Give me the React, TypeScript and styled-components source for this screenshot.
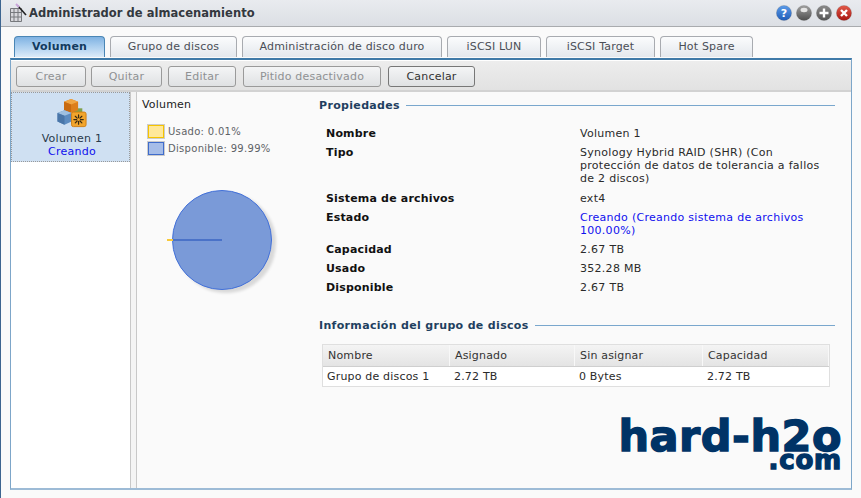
import React from "react";
import styled, { createGlobalStyle } from "styled-components";

const Global = createGlobalStyle`
  html, body { margin: 0; padding: 0; background: #fafafa; }
  body { font-family: "DejaVu Sans", Verdana, sans-serif; font-size: 11px; color: #222; letter-spacing: 0.18px; }
`;

const Win = styled.div`
  width: 861px; height: 498px; box-sizing: border-box; overflow: hidden;
  display: flex; flex-direction: column; background: #fafafa;
  border-left: 1px solid #3d6590; position: relative;
`;
const TitleBar = styled.header`
  height: 26px; flex: none; display: flex; align-items: center;
  background: linear-gradient(#e9ebef, #dcdfe4); border-bottom: 1px solid #a9abae;
  padding: 0 9px 0 8px;
`;
const Title = styled.h1`
  margin: 0 0 0 1px; font-size: 11.5px; font-weight: 700; color: #33383e; flex: 1; letter-spacing: 0.05px;
`;
const WinButtons = styled.div` display: flex; gap: 4px; `;
const TabStrip = styled.nav`
  display: flex; gap: 5px; height: 22px; padding: 8px 0 0 13px; flex: none;
  align-items: flex-end;
`;
const Tab = styled.div<{ $w: number; $active?: boolean }>`
  width: ${p => p.$w}px; height: 21px; box-sizing: border-box; text-align: center;
  border: 1px solid ${p => (p.$active ? "#4a86b5" : "#a8abb0")}; border-bottom: 0;
  border-radius: 4px 4px 0 0; line-height: 20px; font-size: 11px;
  font-weight: ${p => (p.$active ? 700 : 400)};
  color: ${p => (p.$active ? "#123a5e" : "#4a4e56")};
  background: ${p => (p.$active ? "linear-gradient(#7fb2e2, #a9cdee 45%, #dcebf8)" : "linear-gradient(#fbfcfd, #e4e8ed)")};
`;
const Panel = styled.main`
  margin: 1px 9px 0 9px; height: 432px; box-sizing: border-box; display: flex; flex-direction: column;
  border: 1px solid #7da6c9; border-bottom: 2px solid #9dbbd6; border-top: 2px solid #3f7aa8;
  box-shadow: inset 0 1px 0 #fff; padding-top: 1px;
`;
const Toolbar = styled.div`
  height: 31px; flex: none; box-sizing: border-box; display: flex; align-items: center;
  padding: 1px 0 0 5px; background: linear-gradient(#ededed, #e2e2e2); border-bottom: 2px solid #d2d2d2;
`;
const Btn = styled.button<{ $w: number; $gap?: number; $off?: boolean }>`
  width: ${p => p.$w}px; height: 21px; padding: 0; margin-left: ${p => p.$gap ?? 0}px;
  font: 11px "DejaVu Sans", sans-serif; letter-spacing: 0.2px;
  border: 1px solid ${p => (p.$off ? "#9a9a9a" : "#777")}; border-radius: 3px;
  color: ${p => (p.$off ? "#8f9193" : "#333")};
  background: linear-gradient(#f4f5f6, #dfe1e3);
`;
const Split = styled.div` flex: 1; display: flex; min-height: 0; `;
const List = styled.aside`
  width: 120px; box-sizing: border-box; flex: none; background: #fff; border-right: 1px solid #c8c8c8;
`;
const Item = styled.div`
  height: 70px; box-sizing: border-box; background: #cfe0f2; border: 1px dotted #999;
  display: flex; flex-direction: column; align-items: center; padding: 5px 0 0 3px; line-height: 13px; color: #2a3a4a;
  letter-spacing: 0.25px;
`;
const ItemName = styled.span` margin-top: 4px; `;
const Creating = styled.span` color: #1010ee; `;
const Gutter = styled.div` width: 6px; box-sizing: border-box; flex: none; background: #f4f4f4; border-right: 1px solid #c8c8c8; `;
const Content = styled.section` flex: 1; display: flex; background: #fafafa; min-width: 0; position: relative; `;
const Chart = styled.div` width: 182px; flex: none; padding: 6px 0 0 5px; box-sizing: border-box; `;
const Legend = styled.div` display: flex; flex-direction: column; gap: 2px; margin: 13px 0 0 5px; `;
const LegendRow = styled.div`
  display: flex; align-items: center; gap: 3px; height: 15px; font-size: 10px; letter-spacing: 0.3px; color: #5e6266;
`;
const Swatch = styled.i<{ $c: string; $b: string }>`
  width: 14px; height: 11px; background: ${p => p.$c}; border: 1px solid ${p => p.$b}; outline: 1px solid #ccc; margin: 0 1px;
`;
const PieBox = styled.div` margin: 33px 0 0 25px; `;
const Props = styled.div` flex: 1; padding: 6px 16px 0 0; min-width: 0; `;
const Heading = styled.div`
  display: flex; align-items: center; gap: 6px; font-weight: 700; font-size: 11px; letter-spacing: 0.33px; color: #1f3f60;
  height: 14px;
  &::after { content: ""; flex: 1; height: 1px; background: #79a7cd; }
`;
const PropGrid = styled.dl`
  margin: 15px 0 0 7px; display: grid; grid-template-columns: 254px 243px; row-gap: 6px; line-height: 13px;
`;
const Key = styled.dt` font-weight: 700; color: #111; margin: 0; `;
const Val = styled.dd<{ $extra?: number }>`
  margin: 0 0 ${p => p.$extra ?? 0}px 0; color: #2a2a2a; letter-spacing: 0.28px;
`;
const SecondHeading = styled(Heading)` margin-top: 24px; `;
const Table = styled.div`
  margin: 12px 0 0 3px; border: 1px solid #dfdfdf; background: #fff;
  width: 508px; box-sizing: border-box;
`;
const Head = styled.div`
  display: grid; grid-template-columns: 127px 125px 128px 1fr; height: 21px; line-height: 21px;
  background: linear-gradient(#f4f4f4, #e4e4e4); border-bottom: 1px solid #cfcfcf;
`;
const HeadCell = styled.div` padding-left: 5px; border-right: 1px solid #f8f8f8; color: #333; `;
const Row = styled.div`
  display: grid; grid-template-columns: 127px 125px 128px 1fr; height: 19px; line-height: 19px; color: #2a2a2a;
`;
const Cell = styled.div` padding-left: 4px; `;
const Mark = styled.div`
  position: absolute; right: 9px; bottom: 21px; text-align: right; color: #003366; font-weight: 700;
  -webkit-text-stroke: 1.4px #003366; line-height: 1;
`;
const MarkBig = styled.div` font-size: 43px; line-height: 36px; letter-spacing: 0.5px; `;
const MarkSmall = styled.div` font-size: 26px; line-height: 13px; letter-spacing: 0.8px; `;

const Orb = ({ top, bot, children }: { top: string; bot: string; children?: React.ReactNode }) => {
  const id = "o" + top.slice(1);
  return (
    <svg width="16" height="16" viewBox="0 0 16 16">
      <defs>
        <linearGradient id={id} x1="0" y1="0" x2="0" y2="1"><stop offset="0" stopColor={top} /><stop offset="1" stopColor={bot} /></linearGradient>
      </defs>
      <circle cx="8" cy="8" r="7.6" fill={`url(#${id})`} stroke="#666" strokeOpacity=".4" strokeWidth=".6" />
      {children}
    </svg>
  );
};

const AppIcon = () => (
  <svg width="19" height="20" viewBox="0 0 19 20" style={{ flex: "none" }}>
    <g fill="#d8d8dc" stroke="#77797d" strokeWidth="1">
      <path d="M1.5 5.5h11v13h-11z" />
      <path d="M1.5 9.5h11M1.5 14h11M5 5.5v13M9 5.5v13" fill="none" />
    </g>
    <path d="M9 3l8 9" stroke="#222" strokeWidth="1.6" />
    <path d="M7 1l3 3" stroke="#c9a4d8" strokeWidth="2" />
  </svg>
);

const VolumeIcon = () => (
  <svg width="30" height="30" viewBox="0 0 32 32" style={{ flex: "none" }}>
    <rect x="17" y="11" width="10" height="8" fill="#7fa04a" />
    <path d="M15 1l7.500 3v9l-7.500 3-7.500-3V4z" fill="#dd7f1c" />
    <path d="M15 1l7.500 3-7.500 3-7.500-3z" fill="#f0a543" />
    <path d="M15 7v9l-7.500-3V4z" fill="#c96a0f" />
    <path d="M8 13l7.500 3v9L8 28.500 .5 25v-9z" fill="#5d8cc0" />
    <path d="M8 13l7.500 3L8 19 .5 16z" fill="#9fc0e0" />
    <path d="M8 19v9.500L.5 25v-9z" fill="#4a76a8" />
    <rect x="15.500" y="15" width="15.500" height="15.500" rx="2" fill="#f2a52c" stroke="#cf7d12" />
    <g stroke="#3a2a10" strokeWidth="1.300" strokeLinecap="round">
      <path d="M23 18v3M23 25v3M18 23h3M25 23h3M19.500 19.500l2 2M24.500 24.500l2 2M26.500 19.500l-2 2M21.500 24.500l-2 2" />
    </g>
  </svg>
);

const Pie = () => (
  <svg width="115" height="112" viewBox="0 0 115 112" style={{ display: "block" }}>
    <defs>
      <filter id="sh" x="-20%" y="-20%" width="140%" height="140%"><feGaussianBlur stdDeviation="1.500" /></filter>
    </defs>
    <circle cx="59" cy="54" r="50" fill="#000" opacity=".13" filter="url(#sh)" />
    <circle cx="55" cy="51" r="49.500" fill="#7a9ad8" stroke="#4270d8" strokeWidth="1" />
    <path d="M6 51h49" stroke="#4a72c8" strokeWidth="2" />
    <path d="M0 51h6" stroke="#f8c93a" strokeWidth="2" />
  </svg>
);

const tabs: [string, number][] = [
  ["Volumen", 91], ["Grupo de discos", 127], ["Administración de disco duro", 200],
  ["iSCSI LUN", 94], ["iSCSI Target", 109], ["Hot Spare", 93],
];

export default function App() {
  return (
    <Win>
      <Global />
      <TitleBar>
        <AppIcon />
        <Title>Administrador de almacenamiento</Title>
        <WinButtons>
          <Orb top="#5b9be8" bot="#1f5cb8">
            <text x="8" y="12" textAnchor="middle" fontSize="11" fontWeight="700" fontFamily="DejaVu Sans" fill="#fff">?</text>
          </Orb>
          <Orb top="#a0a0a0" bot="#4e4e4e"><ellipse cx="8" cy="5" rx="3.500" ry="2.200" fill="#e4e4e4" /></Orb>
          <Orb top="#8a8a8a" bot="#555"><path d="M8 3.500v9M3.500 8h9" stroke="#fff" strokeWidth="2.400" /></Orb>
          <Orb top="#e25a4a" bot="#a8150f"><path d="M5 5l6 6M11 5l-6 6" stroke="#fff" strokeWidth="2.400" /></Orb>
        </WinButtons>
      </TitleBar>
      <TabStrip>
        {tabs.map(([t, w], i) => <Tab key={t} $w={w} $active={i === 0}>{t}</Tab>)}
      </TabStrip>
      <Panel>
        <Toolbar>
          <Btn $w={70} $off>Crear</Btn>
          <Btn $w={71} $gap={5} $off>Quitar</Btn>
          <Btn $w={68} $gap={6} $off>Editar</Btn>
          <Btn $w={138} $gap={7} $off>Pitido desactivado</Btn>
          <Btn $w={87} $gap={7}>Cancelar</Btn>
        </Toolbar>
        <Split>
          <List>
            <Item>
              <VolumeIcon />
              <ItemName>Volumen 1</ItemName>
              <Creating>Creando</Creating>
            </Item>
          </List>
          <Gutter />
          <Content>
            <Chart>
              <div>Volumen</div>
              <Legend>
                <LegendRow><Swatch $c="#ffe89a" $b="#f6c400" />Usado: 0.01%</LegendRow>
                <LegendRow><Swatch $c="#a6bde8" $b="#3f6ccc" />Disponible: 99.99%</LegendRow>
              </Legend>
              <PieBox><Pie /></PieBox>
            </Chart>
            <Props>
              <Heading>Propiedades</Heading>
              <PropGrid>
                <Key>Nombre</Key><Val>Volumen 1</Val>
                <Key>Tipo</Key><Val $extra={1}>Synology Hybrid RAID (SHR) (Con protección de datos de tolerancia a fallos de 2 discos)</Val>
                <Key>Sistema de archivos</Key><Val>ext4</Val>
                <Key>Estado</Key><Val><Creating>Creando (Creando sistema de archivos 100.00%)</Creating></Val>
                <Key>Capacidad</Key><Val>2.67 TB</Val>
                <Key>Usado</Key><Val>352.28 MB</Val>
                <Key>Disponible</Key><Val>2.67 TB</Val>
              </PropGrid>
              <SecondHeading>Información del grupo de discos</SecondHeading>
              <Table>
                <Head>
                  <HeadCell>Nombre</HeadCell><HeadCell>Asignado</HeadCell><HeadCell>Sin asignar</HeadCell><HeadCell>Capacidad</HeadCell>
                </Head>
                <Row>
                  <Cell>Grupo de discos 1</Cell><Cell>2.72 TB</Cell><Cell>0 Bytes</Cell><Cell>2.72 TB</Cell>
                </Row>
              </Table>
            </Props>
            <Mark>
              <MarkBig>hard-h2o</MarkBig>
              <MarkSmall>.com</MarkSmall>
            </Mark>
          </Content>
        </Split>
      </Panel>
    </Win>
  );
}
